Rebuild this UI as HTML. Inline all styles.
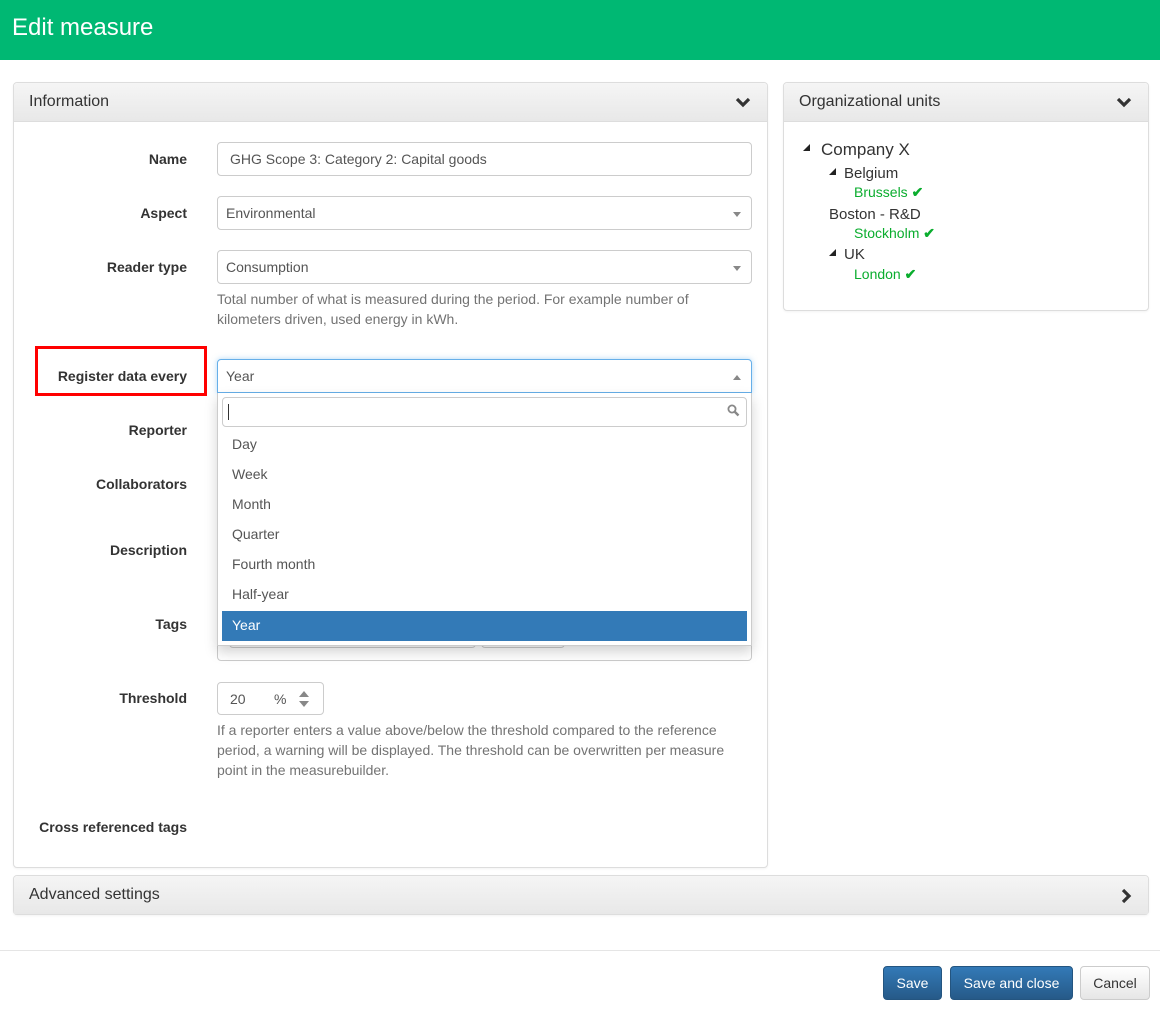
<!DOCTYPE html>
<html><head><style>
*{box-sizing:border-box;margin:0;padding:0}
body{width:1160px;height:1010px;background:#fff;font-family:"Liberation Sans",Arial,sans-serif;font-size:14px;color:#333;position:relative;overflow:hidden}
.a{position:absolute}
.hdr{left:0;top:0;width:1160px;height:60px;background:#00b873;color:#fff;font-size:24px;padding:14px 12px}
.panel{border:1px solid #ddd;border-radius:4px;background:#fff;box-shadow:0 1px 2px rgba(0,0,0,.05)}
.ph{position:absolute;left:0;top:0;right:0;height:39px;background:linear-gradient(#f5f5f5,#e8e8e8);border-bottom:1px solid #ddd;font-size:16px;color:#333;padding:10px 15px;border-radius:4px 4px 0 0}
.lbl{right:973px;font-weight:bold;font-size:14px;text-align:right;white-space:nowrap}
.inp{left:217px;width:535px;height:34px;border:1px solid #ccc;border-radius:4px;padding:8px 12px;color:#555;background:#fff}
.sel{padding-left:8px}
.help{left:217px;width:535px;color:#737373;font-size:14px;line-height:20px}
.caret{position:absolute;right:10px;top:15px;width:0;height:0;border-left:4px solid transparent;border-right:4px solid transparent;border-top:5px solid #888}
.it{position:absolute;left:4px;right:4px;height:30px;padding:6px 10px;color:#555}
.btn{top:966px;height:34px;border-radius:4px;padding:8px 12px;font-size:14px;text-align:center}
.bp{background:linear-gradient(#337ab7,#265a88);color:#fff;border:1px solid #245580}
.chk{color:#0aad2e}
</style></head><body>
<div class="a hdr">Edit measure</div>

<div class="a panel" style="left:13px;top:82px;width:755px;height:786px">
<div class="ph">Information<svg class="a" style="right:16px;top:14px" width="16" height="11" viewBox="0 0 16 11"><path d="M2 2l6 6 6-6" stroke="#333" stroke-width="3.2" fill="none"/></svg></div>
</div>

<div class="a lbl" style="top:151px">Name</div>
<div class="a inp" style="top:142px">GHG Scope 3: Category 2: Capital goods</div>
<div class="a lbl" style="top:205px">Aspect</div>
<div class="a inp sel" style="top:196px">Environmental<span class="caret"></span></div>
<div class="a lbl" style="top:259px">Reader type</div>
<div class="a inp sel" style="top:250px">Consumption<span class="caret"></span></div>
<div class="a help" style="top:289px">Total number of what is measured during the period. For example number of kilometers driven, used energy in kWh.</div>

<div class="a" style="left:35px;top:346px;width:172px;height:50px;border:3px solid #f00"></div>
<div class="a lbl" style="top:368px">Register data every</div>
<div class="a lbl" style="top:422px">Reporter</div>
<div class="a lbl" style="top:476px">Collaborators</div>
<div class="a lbl" style="top:542px">Description</div>
<div class="a lbl" style="top:616px">Tags</div>
<div class="a" style="left:217px;top:600px;width:535px;height:61px;border:1px solid #ccc;border-radius:4px"></div>
<div class="a" style="left:229px;top:630px;width:247px;height:18px;border:1px solid #ccc;border-radius:4px"></div>
<div class="a" style="left:481px;top:630px;width:84px;height:18px;border:1px solid #ccc;border-radius:4px"></div>

<div class="a inp sel" style="top:359px;border-color:#66afe9;box-shadow:0 0 6px rgba(102,175,233,.5);border-radius:4px 4px 0 0">Year<span class="caret" style="border-top:0;border-bottom:5px solid #888"></span></div>
<div class="a" style="left:217px;top:393px;width:535px;height:253px;background:#fff;border:1px solid #ccc;border-top:0;box-shadow:0 6px 12px rgba(0,0,0,.175)">
<div class="a" style="left:4px;top:4px;right:4px;height:30px;border:1px solid #ccc;border-radius:4px"><div class="a" style="left:5px;top:6px;width:1px;height:16px;background:#333"></div>
<svg class="a" style="right:6px;top:6px" width="13" height="13" viewBox="0 0 13 13"><circle cx="5" cy="5" r="3.6" stroke="#888" stroke-width="1.8" fill="none"/><path d="M7.5 7.5l4 4" stroke="#888" stroke-width="2.4"/></svg></div>
<div class="it" style="top:37px">Day</div>
<div class="it" style="top:67px">Week</div>
<div class="it" style="top:97px">Month</div>
<div class="it" style="top:127px">Quarter</div>
<div class="it" style="top:157px">Fourth month</div>
<div class="it" style="top:187px">Half-year</div>
<div class="it" style="top:218px;background:#337ab7;color:#fff">Year</div>
</div>

<div class="a lbl" style="top:690px">Threshold</div>
<div class="a" style="left:217px;top:682px;width:107px;height:33px;border:1px solid #ccc;border-radius:4px;color:#555">
<span class="a" style="left:12px;top:8px">20</span><span class="a" style="left:56px;top:8px">%</span>
<svg class="a" style="left:80px;top:6px" width="12" height="20" viewBox="0 0 12 20"><path d="M1 8L6 2l5 6z M1 12l5 6 5-6z" fill="#888"/></svg></div>
<div class="a help" style="top:720px">If a reporter enters a value above/below the threshold compared to the reference period, a warning will be displayed. The threshold can be overwritten per measure point in the measurebuilder.</div>
<div class="a lbl" style="top:819px">Cross referenced tags</div>

<div class="a panel" style="left:783px;top:82px;width:366px;height:229px">
<div class="ph">Organizational units<svg class="a" style="right:16px;top:14px" width="16" height="11" viewBox="0 0 16 11"><path d="M2 2l6 6 6-6" stroke="#333" stroke-width="3.2" fill="none"/></svg></div>
</div>
<svg class="a" style="left:803px;top:144px" width="8" height="8"><path d="M7 0V7H0z" fill="#222"/></svg>
<div class="a" style="left:821px;top:140px;font-size:17px">Company X</div>
<svg class="a" style="left:829px;top:168px" width="7" height="7"><path d="M7 0V7H0z" fill="#222"/></svg>
<div class="a" style="left:844px;top:165px;font-size:15px">Belgium</div>
<div class="a chk" style="left:854px;top:184px">Brussels <b>✔</b></div>
<div class="a" style="left:829px;top:206px;font-size:15px">Boston - R&amp;D</div>
<div class="a chk" style="left:854px;top:225px">Stockholm <b>✔</b></div>
<svg class="a" style="left:829px;top:249px" width="7" height="7"><path d="M7 0V7H0z" fill="#222"/></svg>
<div class="a" style="left:844px;top:246px;font-size:15px">UK</div>
<div class="a chk" style="left:854px;top:266px">London <b>✔</b></div>

<div class="a panel" style="left:13px;top:875px;width:1136px;height:40px">
<div class="ph" style="height:38px;border-bottom:0">Advanced settings<svg class="a" style="right:16px;top:12px" width="11" height="16" viewBox="0 0 11 16"><path d="M2 2l6 6-6 6" stroke="#333" stroke-width="3.2" fill="none"/></svg></div>
</div>

<div class="a" style="left:0;top:950px;width:1160px;height:1px;background:#e5e5e5"></div>
<div class="a btn bp" style="left:883px;width:59px">Save</div>
<div class="a btn bp" style="left:950px;width:123px">Save and close</div>
<div class="a btn" style="left:1080px;width:70px;background:linear-gradient(#fff,#e6e6e6);border:1px solid #ccc;color:#333">Cancel</div>
</body></html>
